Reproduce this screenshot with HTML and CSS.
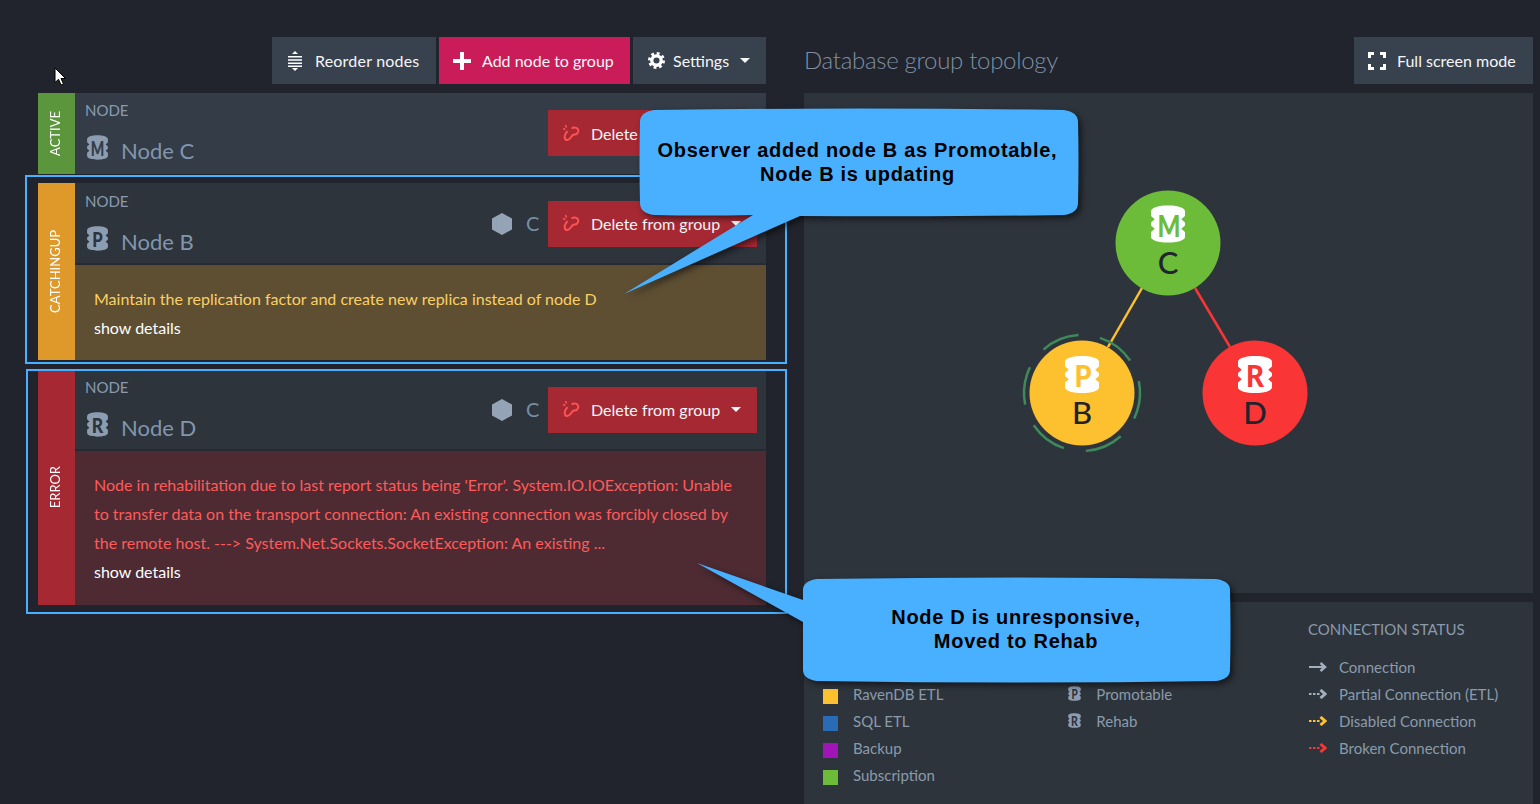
FILE: index.html
```html
<!DOCTYPE html>
<html>

<head>
    <title>Database group</title>
    <link rel="stylesheet" href="styles.css">
</head>

<body>
    <svg class="defs" width="0" height="0">
        <symbol id="db" viewBox="0 0 24 24" preserveAspectRatio="none">
            <path d="M2 4C2 -1 22 -1 22 4V7L19.800 9 22 11V13L19.800 15 22 17V20C22 25 2 25 2 20V17L4.200 15 2 13V11L4.200 9 2 7Z" fill="currentColor" />
        </symbol>
        <symbol id="unlink" viewBox="0 0 18 18">
            <path d="M5.500 7 3.500 10C2 12.500 2.500 16 5.200 16 7 16 8 14.800 9 13.300L10.300 11.500C11.300 10.400 13.400 10.800 15 9.600 17 8 16.700 4.800 14.300 3.800 12.800 3.200 11.200 3.400 9.500 4.500" fill="none" stroke="#ff5252" stroke-width="2" />
            <path d="M3.500 1 4.500 3.600M1 4.600 3.400 5.400" fill="none" stroke="#ff5252" stroke-width="1.600" />
        </symbol>
        <symbol id="hex" viewBox="0 0 20 22">
            <path d="M10 0 20 5.500V16.500L10 22 0 16.500V5.500Z" fill="#94a4b6" />
        </symbol>
    </svg>

    <div class="page">
        <div class="left-col">
            <div class="toolbar">
                <button class="btn btn-reorder">
                    <svg class="icon" width="14" height="20" viewBox="0 0 14 20">
                        <path d="M7 0 10 3H4ZM7 20 4 17H10Z" fill="#fff" />
                        <path d="M0 5H14V6.600H0ZM0 8.200H14V9.800H0ZM0 11.400H14V13H0ZM0 14.600H14V16H0Z" fill="#fff" />
                    </svg>
                    Reorder nodes
                </button>
                <button class="btn btn-add">
                    <svg class="icon" width="18" height="18" viewBox="0 0 18 18">
                        <path d="M7 0H11V7H18V11H11V18H7V11H0V7H7Z" fill="#fff" />
                    </svg>
                    Add node to group
                </button>
                <button class="btn btn-settings">
                    <svg class="icon" width="17" height="17" viewBox="0 0 18 18">
                        <circle cx="9" cy="9" r="5" fill="none" stroke="#fff" stroke-width="3.500" />
                        <circle cx="9" cy="9" r="7.500" fill="none" stroke="#fff" stroke-width="3" stroke-dasharray="3 2.890" />
                    </svg>
                    Settings
                    <span class="caret"></span>
                </button>
            </div>

            <div class="node-card node-card-first">
                <div class="node-side side-active"><span>ACTIVE</span></div>
                <div class="node-main">
                    <div class="node-head">
                        <div class="node-info">
                            <div class="node-label">NODE</div>
                            <div class="node-name">
                                <svg class="node-icon" viewBox="0 0 24 24"><use href="#db" width="24" height="24" /><text x="12" y="20" class="db-letter" fill="#333c47" textLength="13" lengthAdjust="spacingAndGlyphs">M</text></svg>
                                Node C
                            </div>
                        </div>
                        <div class="node-actions">
                            <button class="btn btn-delete">
                                <svg class="icon" width="18" height="18"><use href="#unlink" /></svg>
                                Delete from group
                                <span class="caret"></span>
                            </button>
                        </div>
                    </div>
                </div>
            </div>

            <div class="node-card">
                <div class="node-side side-catching"><span>CATCHINGUP</span></div>
                <div class="node-main">
                    <div class="node-head">
                        <div class="node-info">
                            <div class="node-label">NODE</div>
                            <div class="node-name">
                                <svg class="node-icon" viewBox="0 0 24 24"><use href="#db" width="24" height="24" /><text x="12" y="20" class="db-letter" fill="#2e343c" textLength="10" lengthAdjust="spacingAndGlyphs">P</text></svg>
                                Node B
                            </div>
                        </div>
                        <div class="node-actions">
                            <svg class="hex" width="20" height="22"><use href="#hex" /></svg>
                            <span class="node-tag">C</span>
                            <button class="btn btn-delete">
                                <svg class="icon" width="18" height="18"><use href="#unlink" /></svg>
                                Delete from group
                                <span class="caret"></span>
                            </button>
                        </div>
                    </div>
                    <div class="node-msg msg-warning">
                        <div>Maintain the replication factor and create new replica instead of node D</div>
                        <div class="show-details">show details</div>
                    </div>
                </div>
            </div>

            <div class="node-card">
                <div class="node-side side-error"><span>ERROR</span></div>
                <div class="node-main">
                    <div class="node-head">
                        <div class="node-info">
                            <div class="node-label">NODE</div>
                            <div class="node-name">
                                <svg class="node-icon" viewBox="0 0 24 24"><use href="#db" width="24" height="24" /><text x="12" y="20" class="db-letter" fill="#2e343c" textLength="11" lengthAdjust="spacingAndGlyphs">R</text></svg>
                                Node D
                            </div>
                        </div>
                        <div class="node-actions">
                            <svg class="hex" width="20" height="22"><use href="#hex" /></svg>
                            <span class="node-tag">C</span>
                            <button class="btn btn-delete">
                                <svg class="icon" width="18" height="18"><use href="#unlink" /></svg>
                                Delete from group
                                <span class="caret"></span>
                            </button>
                        </div>
                    </div>
                    <div class="node-msg msg-error">
                        <div>Node in rehabilitation due to last report status being 'Error'. System.IO.IOException: Unable to transfer data on the transport connection: An existing connection was forcibly closed by the remote host. ---&gt; System.Net.Sockets.SocketException: An existing ...</div>
                        <div class="show-details">show details</div>
                    </div>
                </div>
            </div>
        </div>

        <div class="right-col">
            <div class="topology-head">
                <h1>Database group topology</h1>
                <button class="btn btn-fullscreen">
                    <svg class="icon" width="18" height="18" viewBox="0 0 18 18">
                        <path d="M1.500 6V1.500H6M12 1.500H16.500V6M16.500 12V16.500H12M6 16.500H1.500V12" fill="none" stroke="#fff" stroke-width="3" />
                    </svg>
                    Full screen mode
                </button>
            </div>

            <div class="graph">
                <svg class="graph-svg" width="729" height="500" viewBox="804 93 729 500">
                    <line x1="1142" y1="288" x2="1108" y2="347" stroke="#fdc02f" stroke-width="2.500" />
                    <line x1="1195" y1="288" x2="1230" y2="347" stroke="#f93535" stroke-width="2.500" />
                    <circle cx="1168" cy="243" r="52.500" fill="#6cbc3a" />
                    <circle cx="1082" cy="393" r="52.500" fill="#fdc02f" />
                    <circle cx="1255" cy="393" r="52.500" fill="#f93535" />
                    <circle cx="1082" cy="393" r="58" fill="none" stroke="#3f8a5a" stroke-width="2.500" stroke-dasharray="38.400 22.340" transform="rotate(-72 1082 393)" />

                    <use href="#db" x="1147.600" y="205" width="40.800" height="38" color="#fff" />
                    <text x="1169" y="237" class="graph-letter" fill="#6cbc3a" textLength="23" lengthAdjust="spacingAndGlyphs">M</text>
                    <text x="1168" y="274" class="graph-name">C</text>

                    <use href="#db" x="1061.600" y="355.500" width="40.800" height="38" color="#fff" />
                    <text x="1083" y="387" class="graph-letter" fill="#fdc02f" textLength="17" lengthAdjust="spacingAndGlyphs">P</text>
                    <text x="1082" y="424" class="graph-name">B</text>

                    <use href="#db" x="1234.600" y="355.500" width="40.800" height="38" color="#fff" />
                    <text x="1255" y="387" class="graph-letter" fill="#f93535" textLength="18" lengthAdjust="spacingAndGlyphs">R</text>
                    <text x="1255" y="424" class="graph-name">D</text>
                </svg>
            </div>

            <div class="legend">
                <div class="legend-col legend-tasks">
                    <div class="legend-title"></div>
                    <div class="legend-row"></div>
                    <div class="legend-row"><span class="swatch swatch-etl"></span>RavenDB ETL</div>
                    <div class="legend-row"><span class="swatch swatch-sql"></span>SQL ETL</div>
                    <div class="legend-row"><span class="swatch swatch-backup"></span>Backup</div>
                    <div class="legend-row"><span class="swatch swatch-sub"></span>Subscription</div>
                </div>
                <div class="legend-col legend-nodes">
                    <div class="legend-title"></div>
                    <div class="legend-row"></div>
                    <div class="legend-row">
                        <svg class="legend-icon" viewBox="0 0 24 24"><use href="#db" width="24" height="24" /><text x="12" y="20" class="db-letter" fill="#2e343c" textLength="10" lengthAdjust="spacingAndGlyphs">P</text></svg>
                        Promotable
                    </div>
                    <div class="legend-row">
                        <svg class="legend-icon" viewBox="0 0 24 24"><use href="#db" width="24" height="24" /><text x="12" y="20" class="db-letter" fill="#2e343c" textLength="11" lengthAdjust="spacingAndGlyphs">R</text></svg>
                        Rehab
                    </div>
                </div>
                <div class="legend-col legend-status">
                    <div class="legend-title">CONNECTION STATUS</div>
                    <div class="legend-row">
                        <svg class="arrow" width="18" height="10" viewBox="0 0 18 10"><path d="M0 5H15" fill="none" stroke="#a3afbd" stroke-width="2" /><path d="M11.500 1 16 5 11.500 9" fill="none" stroke="#a3afbd" stroke-width="2.500" /></svg>
                        Connection
                    </div>
                    <div class="legend-row">
                        <svg class="arrow" width="18" height="10" viewBox="0 0 18 10"><path d="M0 5H12" fill="none" stroke="#a3afbd" stroke-width="2" stroke-dasharray="2.500 1.500" /><path d="M11.500 1 16 5 11.500 9" fill="none" stroke="#a3afbd" stroke-width="3" /></svg>
                        Partial Connection (ETL)
                    </div>
                    <div class="legend-row">
                        <svg class="arrow" width="18" height="10" viewBox="0 0 18 10"><path d="M0 5H12" fill="none" stroke="#fdc02f" stroke-width="2" stroke-dasharray="2.500 1.500" /><path d="M11.500 1 16 5 11.500 9" fill="none" stroke="#fdc02f" stroke-width="3" /></svg>
                        Disabled Connection
                    </div>
                    <div class="legend-row">
                        <svg class="arrow" width="18" height="10" viewBox="0 0 18 10"><path d="M0 5H12" fill="none" stroke="#f93535" stroke-width="2" stroke-dasharray="2.500 1.500" /><path d="M11.500 1 16 5 11.500 9" fill="none" stroke="#f93535" stroke-width="3" /></svg>
                        Broken Connection
                    </div>
                </div>
            </div>
        </div>
    </div>

    <!-- annotations drawn over the screenshot -->
    <div class="mark mark-b"></div>
    <div class="mark mark-d"></div>

    <div class="callout callout-b">
        <svg class="callout-shape" width="438" height="107" viewBox="0 0 438 107">
            <path d="M0 13Q0 3 14 1 219 -2 424 1 438 3 438 13 439 53 438 94 438 104 424 106 300 108 160 107L-16 185 113 106Q60 107 14 106 0 104 0 94 -1 53 0 13Z" />
        </svg>
        <div>Observer added node B as Promotable,<br>Node B is updating</div>
    </div>

    <div class="callout callout-d">
        <svg class="callout-shape" width="427" height="104" viewBox="0 0 427 104">
            <path d="M0 12Q0 3 14 1 213 -2 413 1 427 3 427 12 428 52 427 92 427 101 413 103 213 106 14 103 0 101 0 92L0 44 -106 -15 0 22Z" />
        </svg>
        <div>Node D is unresponsive,<br>Moved to Rehab</div>
    </div>

    <svg class="pointer" width="13" height="20" viewBox="0 0 13 20">
        <path d="M1 1V15.500L4.500 12.300 7 18 9.500 17 7 11.500H11.500Z" fill="#fff" stroke="#000" stroke-width="1" />
    </svg>
</body>

</html>
```
FILE: styles.css
```css
* {
    box-sizing: border-box;
}

html,
body {
    margin: 0;
    padding: 0;
    height: 804px;
    overflow: hidden;
}

body {
    position: relative;
    font-family: Lato, "Open Sans", sans-serif;
    font-size: 15px;
    background-color: #21242c;
    color: #8a9bab;
}

.defs {
    position: absolute;
}

.page {
    display: flex;
    gap: 38px;
    padding: 37px 7px 0 38px;
}

.left-col {
    width: 728px;
    display: flex;
    flex-direction: column;
    gap: 9px;
}

.right-col {
    width: 729px;
    display: flex;
    flex-direction: column;
    gap: 9px;
}

/* buttons */

.toolbar {
    display: flex;
    justify-content: flex-end;
    gap: 3px;
}

.btn {
    display: flex;
    align-items: center;
    height: 47px;
    border: none;
    padding: 0;
    font-family: inherit;
    font-size: 16px;
    color: #f4f6f8;
    white-space: nowrap;
    background-color: #38424f;
    cursor: pointer;
}

.btn-reorder {
    width: 164px;
    padding-left: 16px;
    gap: 13px;
    letter-spacing: 0.2px;
}

.btn-add {
    width: 191px;
    padding-left: 14px;
    gap: 11px;
    background-color: #ca1c59;
}

.btn-settings {
    width: 133px;
    padding-left: 15px;
    gap: 8px;
}

.btn-settings .caret {
    margin-left: 3px;
}

.btn-fullscreen {
    width: 179px;
    padding-left: 14px;
    gap: 11px;
}

.btn-delete {
    width: 209px;
    height: 46px;
    padding-left: 14px;
    padding-bottom: 2px;
    gap: 11px;
    background-color: #a52833;
}

.node-card-first .btn-delete {
    padding-bottom: 0;
}

.caret {
    width: 0;
    height: 0;
    border-left: 5.5px solid transparent;
    border-right: 5.5px solid transparent;
    border-top: 5px solid #f4f6f8;
}

.icon {
    flex: none;
}

/* node cards */

.node-card {
    display: flex;
}

.node-side {
    flex: none;
    width: 37px;
    padding-right: 3px;
    display: flex;
    align-items: center;
    justify-content: center;
    color: #fff;
    font-size: 13px;
}

.node-side span {
    writing-mode: vertical-rl;
    transform: rotate(180deg);
}

.side-active {
    background-color: #5b963c;
}

.side-catching {
    background-color: #de992a;
}

.side-error {
    background-color: #a52833;
}

.node-main {
    flex: 1;
    min-width: 0;
}

.node-head {
    display: flex;
    justify-content: space-between;
    height: 82px;
    padding: 18px 9px 0 10px;
    border-bottom: 2px solid #262b32;
    background-color: #2e343c;
}

.node-card-first .node-head {
    height: 81px;
    padding-top: 17px;
    border-bottom: none;
    background-color: #333c47;
}

.node-info {
    margin-top: -10px;
}

.node-label {
    font-size: 15px;
    line-height: 20px;
    color: #8a9bb0;
}

.node-name {
    display: flex;
    align-items: center;
    gap: 11px;
    margin-top: 16px;
    font-size: 22px;
    line-height: 30px;
    color: #8296ad;
}

.node-icon {
    width: 25px;
    height: 25px;
    margin-top: -8px;
    color: #8c9db1;
}

.db-letter {
    font-family: Lato, sans-serif;
    font-size: 20px;
    font-weight: 900;
    text-anchor: middle;
}

.node-actions {
    display: flex;
    align-items: flex-start;
}

.hex {
    margin: 12px 14px 0 0;
}

.node-tag {
    width: 22px;
    margin-top: 10px;
    font-size: 20px;
    line-height: 24px;
    color: #7590a6;
}

.node-msg {
    padding: 19px 20px 18px 19px;
    font-size: 16px;
    line-height: 29px;
}

.msg-warning {
    background-color: #5e4f33;
    color: #fbcf63;
}

.msg-error {
    padding-bottom: 19px;
    background-color: #4e2b32;
    color: #ff5a5a;
}

.show-details {
    color: #fff;
}

/* topology */

.topology-head {
    display: flex;
    justify-content: space-between;
    align-items: center;
}

.topology-head h1 {
    margin: -2px 0 0;
    font-size: 24px;
    font-weight: 300;
    letter-spacing: -0.3px;
    color: #7f90a2;
}

.graph {
    height: 500px;
    background-color: #2e343c;
}

.graph-svg {
    display: block;
}

.graph-letter {
    font-family: Lato, sans-serif;
    font-size: 31px;
    font-weight: 900;
    text-anchor: middle;
}

.graph-name {
    font-family: Lato, sans-serif;
    font-size: 31px;
    font-weight: 500;
    text-anchor: middle;
    fill: #21242c;
}

/* legend */

.legend {
    position: relative;
    display: flex;
    height: 202px;
    padding: 17px 0 0 19px;
    background-color: #2e343c;
}

.legend-col {
    flex: none;
}

.legend-tasks {
    width: 244px;
}

.legend-nodes {
    width: 241px;
}

.legend-title {
    height: 25px;
    margin-bottom: 9px;
    line-height: 20px;
}

.legend-row {
    display: flex;
    align-items: center;
    height: 27px;
}

.swatch {
    flex: none;
    width: 15px;
    height: 15px;
    margin: 5px 15px 0 0;
}

.swatch-etl {
    background-color: #fdc02f;
}

.swatch-sql {
    background-color: #2a6bb5;
}

.swatch-backup {
    background-color: #a014b8;
}

.swatch-sub {
    background-color: #6cbc3a;
}

.legend-icon {
    flex: none;
    width: 17px;
    height: 15px;
    margin: 0 13px 0 -0.7px;
    color: #8c9db1;
}

.arrow {
    flex: none;
    margin: 0 12px 0 1px;
}

/* annotations */

.mark {
    position: absolute;
    border: 2px solid #48b0ff;
}

.mark-b {
    left: 25px;
    top: 175px;
    width: 762px;
    height: 189px;
}

.mark-d {
    left: 26px;
    top: 369px;
    width: 761px;
    height: 245px;
}

.callout {
    position: absolute;
    display: flex;
    align-items: center;
    justify-content: center;
    text-align: center;
    padding-bottom: 2px;
    font-family: "Liberation Sans", Arial, sans-serif;
    font-size: 20px;
    font-weight: bold;
    line-height: 24px;
    letter-spacing: 0.7px;
    color: #000;
}

.callout div {
    position: relative;
}

.callout-b {
    left: 640px;
    top: 109px;
    width: 438px;
    height: 107px;
    padding-right: 3px;
}

.callout-d {
    left: 803px;
    top: 578px;
    width: 427px;
    height: 104px;
    padding-right: 1px;
}

.callout-shape {
    position: absolute;
    left: 0;
    top: 0;
    overflow: visible;
    fill: #48b0ff;
    filter: drop-shadow(3px 3px 3px rgba(0, 0, 0, 0.55));
}

.pointer {
    position: absolute;
    left: 54px;
    top: 67px;
}
```
